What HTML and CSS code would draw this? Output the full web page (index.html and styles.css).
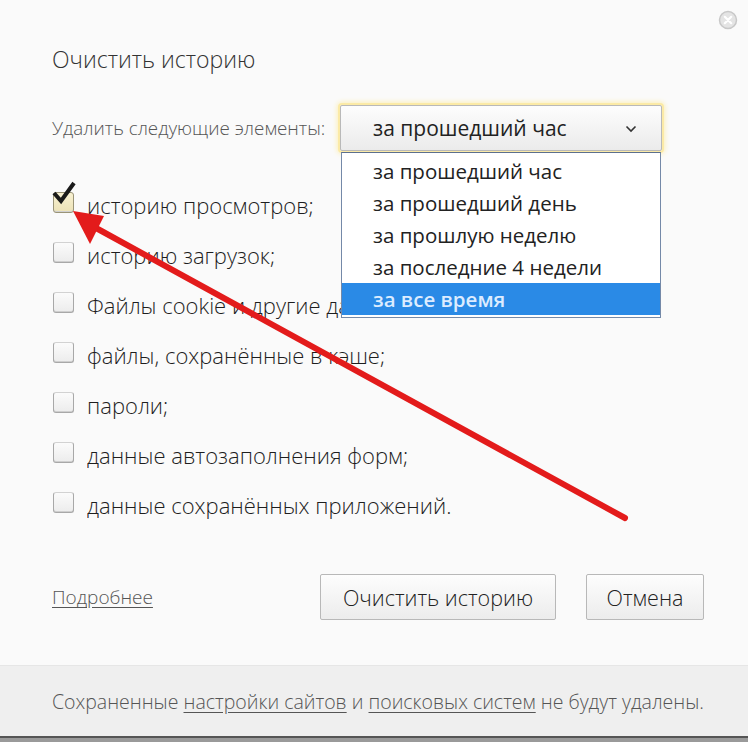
FILE: index.html
```html
<!DOCTYPE html>
<html lang="ru">
<head>
<meta charset="utf-8">
<title>Очистить историю</title>
<link rel="stylesheet" href="styles.css">
</head>
<body>
<div class="dialog">
  <span class="close" aria-label="Закрыть">
    <svg width="20" height="20" viewBox="0 0 20 20">
      <circle cx="10" cy="10" r="8.5" fill="#e4e4e4" stroke="#c8c8c8" stroke-width="1.5"/>
      <path d="M6.8 6.8 L13.2 13.2 M13.2 6.8 L6.8 13.2" stroke="#fff" stroke-width="2.2" stroke-linecap="round"/>
    </svg>
  </span>
  <div class="main">
    <h1 class="title">Очистить историю</h1>
    <div class="range-row">
      <span class="range-label">Удалить следующие элементы:</span>
      <div class="select-wrap">
        <div class="select">
          <span>за прошедший час</span>
          <svg class="chev" width="12" height="8" viewBox="0 0 12 8"><path d="M1.5 1.5 L6 6 L10.5 1.5" fill="none" stroke="#333" stroke-width="1.6"/></svg>
        </div>
        <ul class="dropdown">
          <li>за прошедший час</li>
          <li>за прошедший день</li>
          <li>за прошлую неделю</li>
          <li>за последние 4 недели</li>
          <li class="active">за все время</li>
        </ul>
      </div>
    </div>
    <ul class="checks">
      <li><span class="box checked"><svg class="tick" width="26" height="26" viewBox="0 0 26 26"><path d="M3 12 L10 20 L23 2" fill="none" stroke="#1a1a1a" stroke-width="4" stroke-linejoin="miter"/></svg></span><span class="lbl">историю просмотров;</span></li>
      <li><span class="box"></span><span class="lbl">историю загрузок;</span></li>
      <li><span class="box"></span><span class="lbl">Файлы cookie и другие данные сайтов и модулей;</span></li>
      <li><span class="box"></span><span class="lbl">файлы, сохранённые в кэше;</span></li>
      <li><span class="box"></span><span class="lbl">пароли;</span></li>
      <li><span class="box"></span><span class="lbl">данные автозаполнения форм;</span></li>
      <li><span class="box"></span><span class="lbl">данные сохранённых приложений.</span></li>
    </ul>
    <div class="actions">
      <a class="more" href="#">Подробнее</a>
      <div class="buttons">
        <button class="btn btn-clear">Очистить историю</button>
        <button class="btn btn-cancel">Отмена</button>
      </div>
    </div>
  </div>
  <div class="footer">
    <p class="footer-text">Сохраненные <a href="#">настройки сайтов</a> и <a href="#">поисковых систем</a> не будут удалены.</p>
  </div>
  <div class="bottom-edge"></div>
  <svg class="arrow" width="748" height="742" viewBox="0 0 748 742">
    <line x1="96" y1="228" x2="625" y2="518" stroke="#e31b1b" stroke-width="6" stroke-linecap="round"/>
    <polygon points="73,211 104,216 90,244" fill="#e31b1b"/>
  </svg>
</div>
</body>
</html>
```
FILE: styles.css
```css
html, body {
  margin: 0;
  padding: 0;
}
body {
  background: #fafafa;
  font-family: "Open Sans", "Noto Sans", sans-serif;
  color: #222;
}
.dialog {
  position: relative;
  width: 748px;
  height: 742px;
  overflow: hidden;
  display: flex;
  flex-direction: column;
  background: #fafafa;
}
.close {
  position: absolute;
  top: 10px;
  right: 10px;
  width: 20px;
  height: 20px;
}
.main {
  padding: 0 44px 0 52px;
  flex: 1;
}
.title {
  margin: 44px 0 0;
  font-size: 23px;
  font-weight: 300;
  line-height: 30px;
  color: #333;
}
.range-row {
  display: flex;
  align-items: center;
  margin-top: 30px;
  height: 48px;
}
.range-label {
  font-size: 18.8px;
  font-weight: 300;
  color: #555;
  width: 288px;
  white-space: nowrap;
}
.select-wrap {
  position: relative;
  width: 322px;
}
.select {
  height: 44px;
  border: 1px solid #b9b9b9;
  border-radius: 2px;
  background: linear-gradient(#fdfdfd, #ebebeb);
  box-shadow: 0 0 0 2px #fbeaa6, 0 0 5px 3px #fcefb8;
  display: flex;
  align-items: center;
  justify-content: space-between;
  padding: 0 24px 0 32px;
  font-size: 21px;
  color: #222;
}
.chev {
  margin-top: 2px;
}
.dropdown {
  position: absolute;
  left: 1px;
  top: 47px;
  width: 318px;
  margin: 0;
  padding: 2px 0 2px;
  list-style: none;
  background: #fff;
  border: 1px solid #7489a8;
  border-top-color: #5b6f8e;
  z-index: 2;
}
.dropdown li {
  height: 32px;
  line-height: 32px;
  padding-left: 31px;
  font-size: 20.5px;
  color: #222;
  white-space: nowrap;
}
.dropdown li.active {
  background: #2a8ae6;
  color: #dcecff;
  font-weight: 600;
}
.checks {
  list-style: none;
  margin: 28px 0 0;
  padding: 0;
}
.checks li {
  display: flex;
  align-items: center;
  height: 50px;
  font-size: 22px;
  font-weight: 300;
  color: #1e1e1e;
  white-space: nowrap;
}
.lbl {
  max-width: 254px;
  overflow: hidden;
}
.checks li:nth-child(n+4) .lbl {
  max-width: none;
}
.box {
  position: relative;
  flex: none;
  width: 19px;
  height: 19px;
  margin: -6px 13px 0 1px;
  border: 1px solid #a8a8a8;
  border-top-color: #d2d2d2;
  border-radius: 3px;
  background: linear-gradient(#fbfbfb, #ececec);
  box-shadow: inset 0 -1px 0 #cfcfcf;
}
.box.checked {
  background: linear-gradient(#f8f1d2, #ece2b7);
  border-color: #9a9477;
}
.tick {
  position: absolute;
  left: -3px;
  top: -12px;
}
.actions {
  display: flex;
  align-items: center;
  justify-content: space-between;
  margin-top: 44px;
}
.more {
  font-size: 19px;
  font-weight: 300;
  color: #555;
  text-decoration: underline;
  text-underline-offset: 3px;
}
.buttons {
  display: flex;
  gap: 30px;
}
.btn {
  height: 46px;
  border: 1px solid #b8b8b8;
  border-radius: 2px;
  background: linear-gradient(#fdfdfd, #ececec);
  font-family: inherit;
  font-size: 21.5px;
  font-weight: 300;
  color: #222;
  padding: 0;
}
.btn-clear {
  width: 236px;
}
.btn-cancel {
  width: 118px;
}
.footer {
  height: 70px;
  padding-left: 52px;
  background: #efefef;
  border-top: 1px solid #e6e6e6;
}
.footer-text {
  margin: 0;
  line-height: 72px;
  font-size: 19.5px;
  font-weight: 300;
  color: #555;
  white-space: nowrap;
}
.footer-text a {
  color: #555;
  text-decoration: underline;
  text-underline-offset: 3px;
}
.bottom-edge {
  height: 4px;
  border-top: 2px solid #555;
  background: #9a9a9a;
}
.arrow {
  position: absolute;
  left: 0;
  top: 0;
  pointer-events: none;
  z-index: 3;
}
```
